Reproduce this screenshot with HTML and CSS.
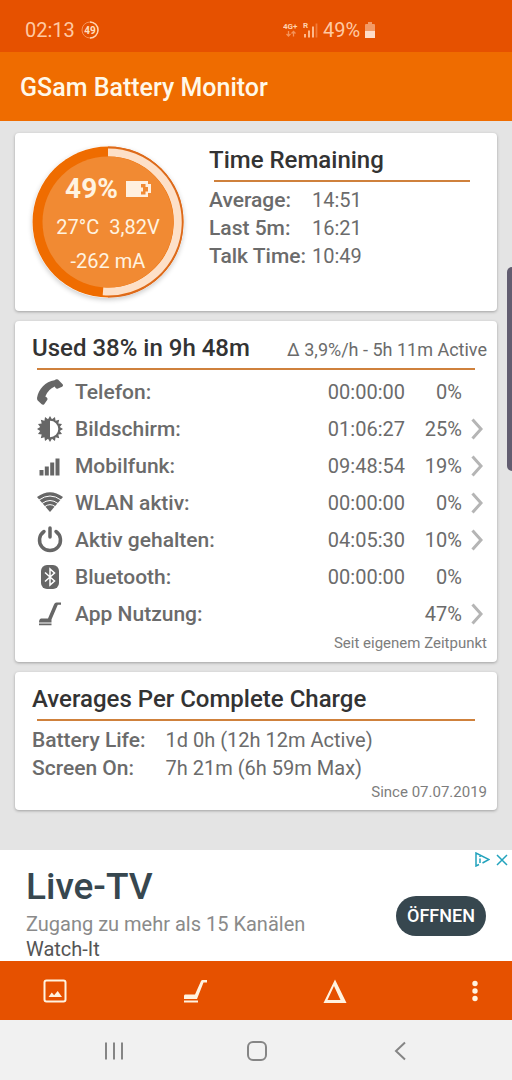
FILE: index.html
```html
<!DOCTYPE html>
<html lang="de">
<head>
<meta charset="utf-8">
<meta name="viewport" content="width=device-width, initial-scale=1">
<title>GSam Battery Monitor</title>
<link rel="stylesheet" href="styles.css">
</head>
<body>
<div class="screen">
  <div class="status">
    <div class="status-left">
      <span>02:13</span>
      <svg class="status-ring" viewBox="0 0 18 18" width="18" height="18" aria-hidden="true">
        <circle cx="9" cy="9" r="8" fill="none" stroke="#f4935a" stroke-width="1"/>
        <path d="M9 1a8 8 0 0 1 0 16" fill="none" stroke="#ffd3b0" stroke-width="1.500"/>
        <text x="9" y="12.500" text-anchor="middle" class="ring-text">49</text>
      </svg>
    </div>
    <div class="status-right">
      <svg viewBox="0 0 35 18" width="35" height="18" aria-hidden="true">
        <text x="0" y="8" class="net-text">4G+</text>
        <path d="M5.500 10v5M3.500 13l2 2 2-2M10.500 15.500v-5M8.500 12.500l2-2 2 2" fill="none" stroke="#f4935a" stroke-width="1.300"/>
        <text x="20" y="7" class="net-text">R</text>
        <path d="M22 13v3.500M26 9.500v7M30 5.500v11" stroke="#ffc49a" stroke-width="1.800"/>
        <path d="M33.500 2.500v14" stroke="#f07c3a" stroke-width="1.800"/>
      </svg>
      <span>49%</span>
      <svg viewBox="0 0 10 16" width="10" height="16" aria-hidden="true">
        <path d="M3 0h4v2h2q1 0 1 1v6H0V3q0-1 1-1h2z" fill="#f39a66"/>
        <path d="M0 9h10v7H0z" fill="#ffdcc8"/>
      </svg>
    </div>
  </div>
  <header class="appbar"><h1>GSam Battery Monitor</h1></header>

  <main class="content">
    <section class="card remaining">
      <div class="gauge">
        <svg viewBox="0 0 152 152" width="152" height="152" aria-hidden="true">
          <circle cx="76" cy="76" r="75.500" fill="#ef6c00"/>
          <path d="M76 1.500a74.500 74.500 0 0 1 0 149" fill="none" stroke="#dc6a1c" stroke-width="2"/>
          <path d="M76 6.500a69.500 69.500 0 1 1-5 138.800" fill="none" stroke="#fde0c8" stroke-width="8"/>
          <circle cx="76" cy="76" r="65.500" fill="#f18a33"/>
        </svg>
        <div class="gauge-text">
          <div class="gauge-level">
            <span>49%</span>
            <svg viewBox="0 0 25 16" width="25" height="16" aria-hidden="true">
              <path d="M0 0h22v3h3v9h-3v4H0z" fill="#fff0e0"/>
              <path d="M15 3h4.500v3H22v4.500h-2.500v3H15V10.500h2V6.500h-2z" fill="#f18a33"/>
            </svg>
          </div>
          <div class="gauge-pair"><span>27°C</span><span>3,82V</span></div>
          <div>-262 mA</div>
        </div>
      </div>
      <div class="times">
        <h2>Time Remaining</h2>
        <hr>
        <dl class="facts">
          <dt>Average:</dt><dd>14:51</dd>
          <dt>Last 5m:</dt><dd>16:21</dd>
          <dt>Talk Time:</dt><dd>10:49</dd>
        </dl>
      </div>
    </section>

    <section class="card">
      <div class="card-head"><h2>Used 38% in 9h 48m</h2><span class="rate">Δ 3,9%/h - 5h 11m Active</span></div>
      <hr>
      <table class="usage">
        <tr>
          <td class="icon"><svg viewBox="0 0 26 26" width="26" height="26" aria-hidden="true"><path d="M17.500 1.200Q19.500-.3 21 .6L25.600 5.200Q26.600 6.500 25.200 7.700L21 9.600Q19.500 10.200 18.400 8.800L17.800 7.600Q11 10.500 8.300 17.500L9.800 18.500Q11 19.700 10.200 21L7.200 25.200Q6 26.300 4.700 25.300L.7 21.500Q-.2 20.300.1 18.500C1.500 10 8.500 2.500 17.500 1.200z"/></svg></td>
          <th scope="row">Telefon:</th><td class="time">00:00:00</td><td class="pct">0%</td><td class="more"></td>
        </tr>
        <tr>
          <td class="icon"><svg viewBox="-13 -13 26 26" width="26" height="26" aria-hidden="true"><path fill-rule="evenodd" d="M13 0L9.810 1.950 12.010 4.970 8.310 5.560 9.190 9.190 5.560 8.310 4.970 12.010 1.950 9.810 0 13-1.950 9.810-4.970 12.010-5.560 8.310-9.190 9.190-8.310 5.560-12.010 4.970-9.810 1.950-13 0-9.810-1.950-12.010-4.970-8.310-5.560-9.190-9.190-5.560-8.310-4.970-12.010-1.950-9.810 0-13 1.950-9.810 4.970-12.010 5.560-8.310 9.190-9.190 8.310-5.560 12.010-4.970 9.810-1.950zM0-8.300V8.300A8.300 8.300 0 0 0 0-8.300z"/></svg></td>
          <th scope="row">Bildschirm:</th><td class="time">01:06:27</td><td class="pct">25%</td>
          <td class="more"><button aria-label="Bildschirm Details"><svg viewBox="0 0 12 22" width="12" height="22"><path d="M1.500 1.500L10 11 1.500 20.500"/></svg></button></td>
        </tr>
        <tr>
          <td class="icon"><svg viewBox="0 0 26 26" width="26" height="26" aria-hidden="true"><path d="M2.500 17h4v5.500h-4zM7.800 13.500h4v9h-4zM13.200 9.500h4v13h-4zM18.500 5.500h4v17h-4z"/></svg></td>
          <th scope="row">Mobilfunk:</th><td class="time">09:48:54</td><td class="pct">19%</td>
          <td class="more"><button aria-label="Mobilfunk Details"><svg viewBox="0 0 12 22" width="12" height="22"><path d="M1.500 1.500L10 11 1.500 20.500"/></svg></button></td>
        </tr>
        <tr>
          <td class="icon"><svg viewBox="0 0 26 26" width="26" height="26" aria-hidden="true"><path d="M0 7Q13-2.500 26 7L13 22z"/><path class="gap" d="M2 10Q13 2 24 10M5 13.500Q13 7.500 21 13.500M7.500 16.800Q13 12.500 18.500 16.800"/></svg></td>
          <th scope="row">WLAN aktiv:</th><td class="time">00:00:00</td><td class="pct">0%</td>
          <td class="more"><button aria-label="WLAN Details"><svg viewBox="0 0 12 22" width="12" height="22"><path d="M1.500 1.500L10 11 1.500 20.500"/></svg></button></td>
        </tr>
        <tr>
          <td class="icon"><svg viewBox="0 0 26 27" width="26" height="27" aria-hidden="true"><path class="line" d="M7 5.500A10.500 10.500 0 1 0 19 5.500M13 2v9"/></svg></td>
          <th scope="row">Aktiv gehalten:</th><td class="time">04:05:30</td><td class="pct">10%</td>
          <td class="more"><button aria-label="Aktiv gehalten Details"><svg viewBox="0 0 12 22" width="12" height="22"><path d="M1.500 1.500L10 11 1.500 20.500"/></svg></button></td>
        </tr>
        <tr>
          <td class="icon"><svg viewBox="0 0 26 26" width="26" height="26" aria-hidden="true"><rect x="4" y="1" width="18" height="24" rx="6"/><path class="gap bold" d="M8 8.500L17.500 17 13 21V5L17.500 9 8 17.500"/></svg></td>
          <th scope="row">Bluetooth:</th><td class="time">00:00:00</td><td class="pct">0%</td><td class="more"></td>
        </tr>
        <tr>
          <td class="icon"><svg viewBox="0 0 26 26" width="26" height="26" aria-hidden="true"><path d="M4 17.500H11L17 3.500Q17.700 1.500 19.500 1.500H24V3.700H20.800L14.500 18.500V21.500H2Q2 18 4 17.500zM2 22.500h12.500v1.800H2z"/></svg></td>
          <th scope="row">App Nutzung:</th><td class="time"></td><td class="pct">47%</td>
          <td class="more"><button aria-label="App Nutzung Details"><svg viewBox="0 0 12 22" width="12" height="22"><path d="M1.500 1.500L10 11 1.500 20.500"/></svg></button></td>
        </tr>
      </table>
      <p class="note">Seit eigenem Zeitpunkt</p>
    </section>

    <section class="card averages">
      <h2>Averages Per Complete Charge</h2>
      <hr>
      <dl class="facts">
        <dt>Battery Life:</dt><dd>1d 0h (12h 12m Active)</dd>
        <dt>Screen On:</dt><dd>7h 21m (6h 59m Max)</dd>
      </dl>
      <p class="note">Since 07.07.2019</p>
    </section>
    <div class="edge-handle"></div>
  </main>

  <aside class="ad">
    <div class="ad-copy">
      <h3>Live-TV</h3>
      <p class="ad-text">Zugang zu mehr als 15 Kanälen</p>
      <p class="ad-brand">Watch-It</p>
    </div>
    <button class="open">ÖFFNEN</button>
    <div class="ad-choices">
      <svg viewBox="0 0 15 15" width="15" height="15" aria-hidden="true"><path d="M4 12.500L1 14V1L14 7.500 7.500 11M5 6.500V11M5 4v1"/></svg>
      <button aria-label="Anzeige schließen"><svg viewBox="0 0 12 12" width="12" height="12"><path d="M1 1l10 10M11 1L1 11"/></svg></button>
    </div>
  </aside>

  <nav class="toolbar">
    <button aria-label="Diagramm"><svg viewBox="0 0 24 24" width="24" height="24"><rect x="1.500" y="1.500" width="21" height="21" rx="2" fill="none" stroke="#fff3e0" stroke-width="2"/><path d="M5.500 18l3.300-4.500 2.300 2.700 3.600-4.200 4.300 6z"/></svg></button>
    <button aria-label="App Nutzung"><svg viewBox="0 0 24 24" width="24" height="24"><path d="M2 15.500h10L18 2q.5-1 1.500-1H24v2.500h-3.500L14 20H1v-3q0-1.500 1-1.500zM1 21.500h14v2H1z"/></svg></button>
    <button aria-label="Delta"><svg viewBox="0 0 24 24" width="24" height="24"><path fill-rule="evenodd" d="M12 .5L23.500 24H.5zM11 7L4.500 21H17.500z"/></svg></button>
    <button aria-label="Weitere Optionen"><svg viewBox="0 0 24 24" width="24" height="24"><circle cx="12" cy="4.500" r="2.700"/><circle cx="12" cy="12" r="2.700"/><circle cx="12" cy="19.500" r="2.700"/></svg></button>
  </nav>

  <nav class="system">
    <button aria-label="Letzte Apps"><svg viewBox="0 0 22 22" width="22" height="22"><path d="M3 2.500v17M11 2.500v17M19 2.500v17"/></svg></button>
    <button aria-label="Startseite"><svg viewBox="0 0 22 22" width="22" height="22"><rect x="2" y="2" width="18" height="18" rx="5"/></svg></button>
    <button aria-label="Zurück"><svg viewBox="0 0 22 22" width="22" height="22"><path d="M16 2.500L7 11l9 8.500"/></svg></button>
  </nav>
</div>
</body>
</html>
```

FILE: styles.css
```css
* { box-sizing: border-box; }
body, h1, h2, h3, p, dl, dd { margin: 0; }
body {
  font-family: Roboto, "Noto Sans", sans-serif;
  font-size: 20px;
  color: #6b6b6b;
}
svg { display: block; flex: none; }
button {
  border: 0;
  padding: 0;
  background: none;
  font: inherit;
  color: inherit;
  cursor: pointer;
}
.screen {
  min-height: 100vh;
  display: flex;
  flex-direction: column;
  background: #e4e4e4;
}

.status {
  display: grid;
  grid-template-columns: 53% 1fr;
  align-items: center;
  padding: 18px 0 10px 25px;
  line-height: 24px;
  background: #e65100;
  color: #ffc9a3;
}
.status-left { display: flex; align-items: center; gap: 6px; }
.status-right { display: flex; align-items: center; gap: 5px; }
.ring-text { font-size: 10px; font-weight: 700; fill: #ffe0c4; }
.net-text { font-size: 8px; font-weight: 700; fill: #ffd3b0; }

.appbar { padding: 21px 20px 18px; background: #ef6c00; color: #fff8e8; }
.appbar h1 { font-size: 25px; line-height: 30px; font-weight: 500; }

.content {
  position: relative;
  flex: 1;
  display: flex;
  flex-direction: column;
  gap: 10px;
  padding: 12px 15px 39px;
}
.card {
  padding: 13px 10px 9px 17px;
  background: #fff;
  border-radius: 4px;
  box-shadow: 0 1px 3px #0000004d;
}
h2 { font-size: 24px; line-height: 28px; font-weight: 500; color: #333; }
hr {
  height: 2px;
  margin: 6px 12px 4px 5px;
  border: 0;
  background: #cf813c;
}
.remaining { display: flex; gap: 25px; min-height: 178px; }
.gauge { display: grid; align-self: flex-start; border-radius: 50%; box-shadow: 0 2px 5px #00000033; }
.gauge > * { grid-area: 1 / 1; }
.gauge-text {
  display: flex;
  flex-direction: column;
  align-items: center;
  gap: 10px;
  padding-top: 29px;
  line-height: 24px;
  color: #fff3e0;
}
.gauge-level { display: flex; align-items: center; gap: 8px; margin-bottom: 2px; font-size: 28px; font-weight: 700; line-height: 28px; }
.gauge-pair { display: flex; gap: 10px; }
.times { flex: 1; }
.times hr { margin-right: 17px; }
.facts { display: grid; grid-template-columns: max-content 1fr; column-gap: 6px; line-height: 28px; }
.facts dt { font-size: 21px; font-weight: 500; }
.averages .facts { column-gap: 20px; padding-top: 1px; }
.averages { padding-bottom: 8px; }
.card-head { display: flex; justify-content: space-between; align-items: center; }
.rate { padding-top: 3px; font-size: 18px; line-height: 24px; }

.usage { width: 100%; margin-top: -1px; margin-bottom: 1px; border-collapse: collapse; }
.usage td, .usage th { height: 37px; padding: 0; }
.usage th { font-size: 21px; line-height: 24px; font-weight: 500; text-align: left; }
.usage .icon { width: 43px; padding-left: 5px; }
.icon svg { fill: #666; }
.icon .line { fill: none; stroke: #666; stroke-width: 3.5; stroke-linecap: round; }
.icon .gap { fill: none; stroke: #fff; stroke-width: 1; }
.icon .bold { stroke-width: 1.5; }
.time, .pct { text-align: right; }
.pct { width: 57px; }
.more { width: 25px; }
.more button { display: block; margin-left: 9px; }
.more path { fill: none; stroke: #b5b5b5; stroke-width: 3; }
.note { font-size: 15px; line-height: 20px; text-align: right; color: #7d7d7d; }

.edge-handle {
  position: absolute;
  top: 146px;
  right: 0;
  width: 5px;
  height: 204px;
  border-radius: 5px 0 0 5px;
  background: #625d70;
}

.ad {
  position: relative;
  display: flex;
  align-items: center;
  justify-content: space-between;
  height: 111px;
  padding: 0 26px;
  overflow: hidden;
  background: #fff;
}
.ad-copy { align-self: flex-start; padding-top: 14px; }
.ad h3 { font-size: 37px; line-height: 46px; font-weight: 500; color: #37474f; }
.ad-text { line-height: 28px; color: #8a8a8a; }
.ad-brand { line-height: 23px; color: #555; }
.open {
  height: 40px;
  margin-top: 20px;
  padding: 0 11px;
  border-radius: 20px;
  background: #37474f;
  color: #fff;
  font-size: 18px;
  font-weight: 500;
}
.ad-choices { position: absolute; top: 2px; right: 4px; display: flex; align-items: center; gap: 6px; }
.ad-choices path { fill: none; stroke: #23a3bd; stroke-width: 1.5; }

.toolbar {
  display: flex;
  justify-content: space-between;
  align-items: center;
  height: 59px;
  padding: 0 25px 0 43px;
  background: #e65100;
}
.toolbar svg { fill: #fff3e0; }
.system {
  display: flex;
  justify-content: space-between;
  align-items: center;
  height: 60px;
  padding: 2px 101px 0 103px;
  background: #f1f1f1;
}
.system path, .system rect { fill: none; stroke: #858585; stroke-width: 2; }
```
